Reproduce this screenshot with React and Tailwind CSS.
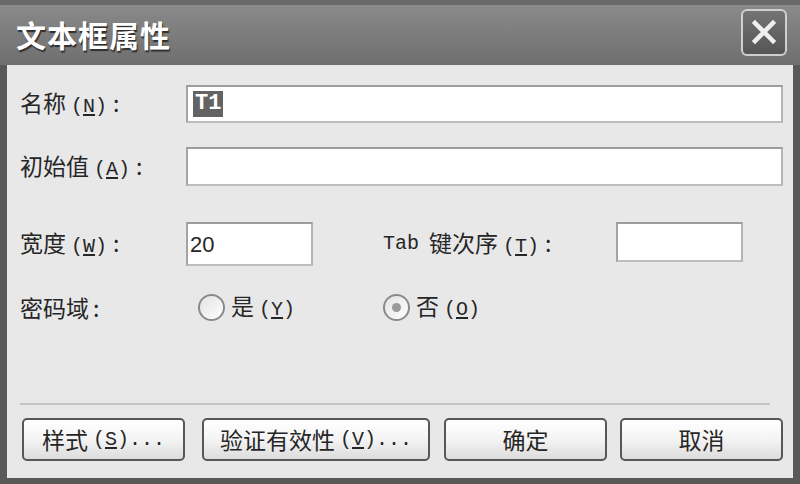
import React from 'react';

// Windows XP style "文本框属性" dialog, grayscale
const cjk = { fontFamily: '"Noto Sans CJK SC", "Liberation Sans", sans-serif' };
const mono = { fontFamily: '"Liberation Mono", "Noto Sans CJK SC", monospace' };

const Hotkey = ({ k, dots }) => (
    <span className="text-[20px] ml-[5px]" style={mono}>
        (<span className="underline underline-offset-2">{k}</span>){dots}
    </span>
);

const Label = ({ text, hotkey, className = '' }) => (
    <span className={`text-[23px] leading-none text-[#262626] whitespace-nowrap ${className}`} style={cjk}>
        {text}
        <Hotkey k={hotkey} />
        <span className="ml-[6px]">:</span>
    </span>
);

const Field = ({ className = '', children }) => (
    <div
        className={`bg-white border-2 border-t-[#9c9c9c] border-l-[#a4a4a4] border-r-[#b4b4b4] border-b-[#bdbdbd] flex items-center ${className}`}
    >
        {children}
    </div>
);

const Radio = ({ checked }) => (
    <span className="w-[27px] h-[27px] rounded-full border-2 border-[#8a8a8a] bg-gradient-to-br from-[#e2e2e2] to-white flex items-center justify-center">
        {checked && <span className="w-[9px] h-[9px] rounded-full bg-[#9a9a9a]" />}
    </span>
);

const Button = ({ className = '', children }) => (
    <button
        className={`h-[43px] rounded-[5px] border-2 border-[#575757] bg-gradient-to-b from-white via-[#f4f4f4] to-[#dcdcdc] text-[23px] text-[#262626] flex items-center justify-center whitespace-nowrap ${className}`}
        style={cjk}
    >
        {children}
    </button>
);

const App = () => {
    return (
        <div className="w-[800px] h-[484px] bg-[#595959] flex flex-col overflow-hidden">
            {/* title bar */}
            <div className="h-[65px] shrink-0 bg-gradient-to-b from-[#8a8a8a] via-[#7c7c7c] to-[#6f6f6f] border-t-[5px] border-t-[#6a6a6a] flex items-center justify-between pl-[16px] pr-[13px]">
                <span className="text-[30px] font-bold text-white tracking-[1px] [text-shadow:1px_2px_1px_#2e2e2e] -mt-[2px]" style={cjk}>
                    文本框属性
                </span>
                <span className="w-[46px] h-[47px] -mt-[6px] rounded-[6px] border-2 border-[#cfcfcf] bg-gradient-to-b from-[#747474] to-[#565656] flex items-center justify-center">
                    <svg width="28" height="28" viewBox="0 0 28 28">
                        <path d="M5 5 L23 23 M23 5 L5 23" stroke="#f0f0f0" strokeWidth="4.5" strokeLinecap="square" />
                    </svg>
                </span>
            </div>

            {/* body */}
            <div className="flex-1 mx-[7px] mb-[6px] bg-[#e8e8e8] flex flex-col pt-[20px] pl-[13px] pr-[10px] pb-[17px]">
                <div className="flex items-center h-[38px]">
                    <Label text="名称" hotkey="N" className="w-[166px]" />
                    <Field className="flex-1 h-[38px] pl-[5px]">
                        <span className="bg-[#636363] text-white text-[22px] font-bold leading-[26px] px-[2px]" style={mono}>
                            T1
                        </span>
                    </Field>
                </div>

                <div className="flex items-center h-[39px] mt-[24px]">
                    <Label text="初始值" hotkey="A" className="w-[166px]" />
                    <Field className="flex-1 h-[39px]" />
                </div>

                <div className="flex items-center h-[44px] mt-[36px]">
                    <Label text="宽度" hotkey="W" className="w-[166px]" />
                    <Field className="w-[127px] h-[44px] pl-[2px]">
                        <span className="text-[22px] text-[#262626]" style={{ fontFamily: '"Liberation Sans", sans-serif' }}>20</span>
                    </Field>
                    <span className="ml-[70px] w-[233px] flex items-center">
                        <span className="text-[20px] text-[#262626] mr-[10px]" style={mono}>Tab</span>
                        <Label text="键次序" hotkey="T" />
                    </span>
                    <Field className="w-[127px] h-[40px] -mt-[4px]" />
                </div>

                <div className="flex items-center h-[30px] mt-[26px]">
                    <span className="w-[178px] text-[23px] leading-none text-[#262626]" style={cjk}>
                        密码域<span className="ml-[4px]">:</span>
                    </span>
                    <span className="flex items-center gap-[6px] w-[185px]">
                        <Radio />
                        <span className="text-[23px] leading-none text-[#262626]" style={cjk}>
                            是<Hotkey k="Y" />
                        </span>
                    </span>
                    <span className="flex items-center gap-[6px]">
                        <Radio checked />
                        <span className="text-[23px] leading-none text-[#262626]" style={cjk}>
                            否<Hotkey k="O" />
                        </span>
                    </span>
                </div>

                <div className="flex-1" />

                <div className="h-[2px] bg-[#c4c4c4] mr-[13px]" />

                <div className="flex items-center mt-[13px] pl-[2px]">
                    <Button className="w-[163px]">
                        样式<Hotkey k="S" dots="..." />
                    </Button>
                    <Button className="w-[228px] ml-[17px]">
                        验证有效性<Hotkey k="V" dots="..." />
                    </Button>
                    <Button className="w-[163px] ml-[14px]">确定</Button>
                    <Button className="w-[163px] ml-[13px]">取消</Button>
                </div>
            </div>
        </div>
    );
};

export default App;
